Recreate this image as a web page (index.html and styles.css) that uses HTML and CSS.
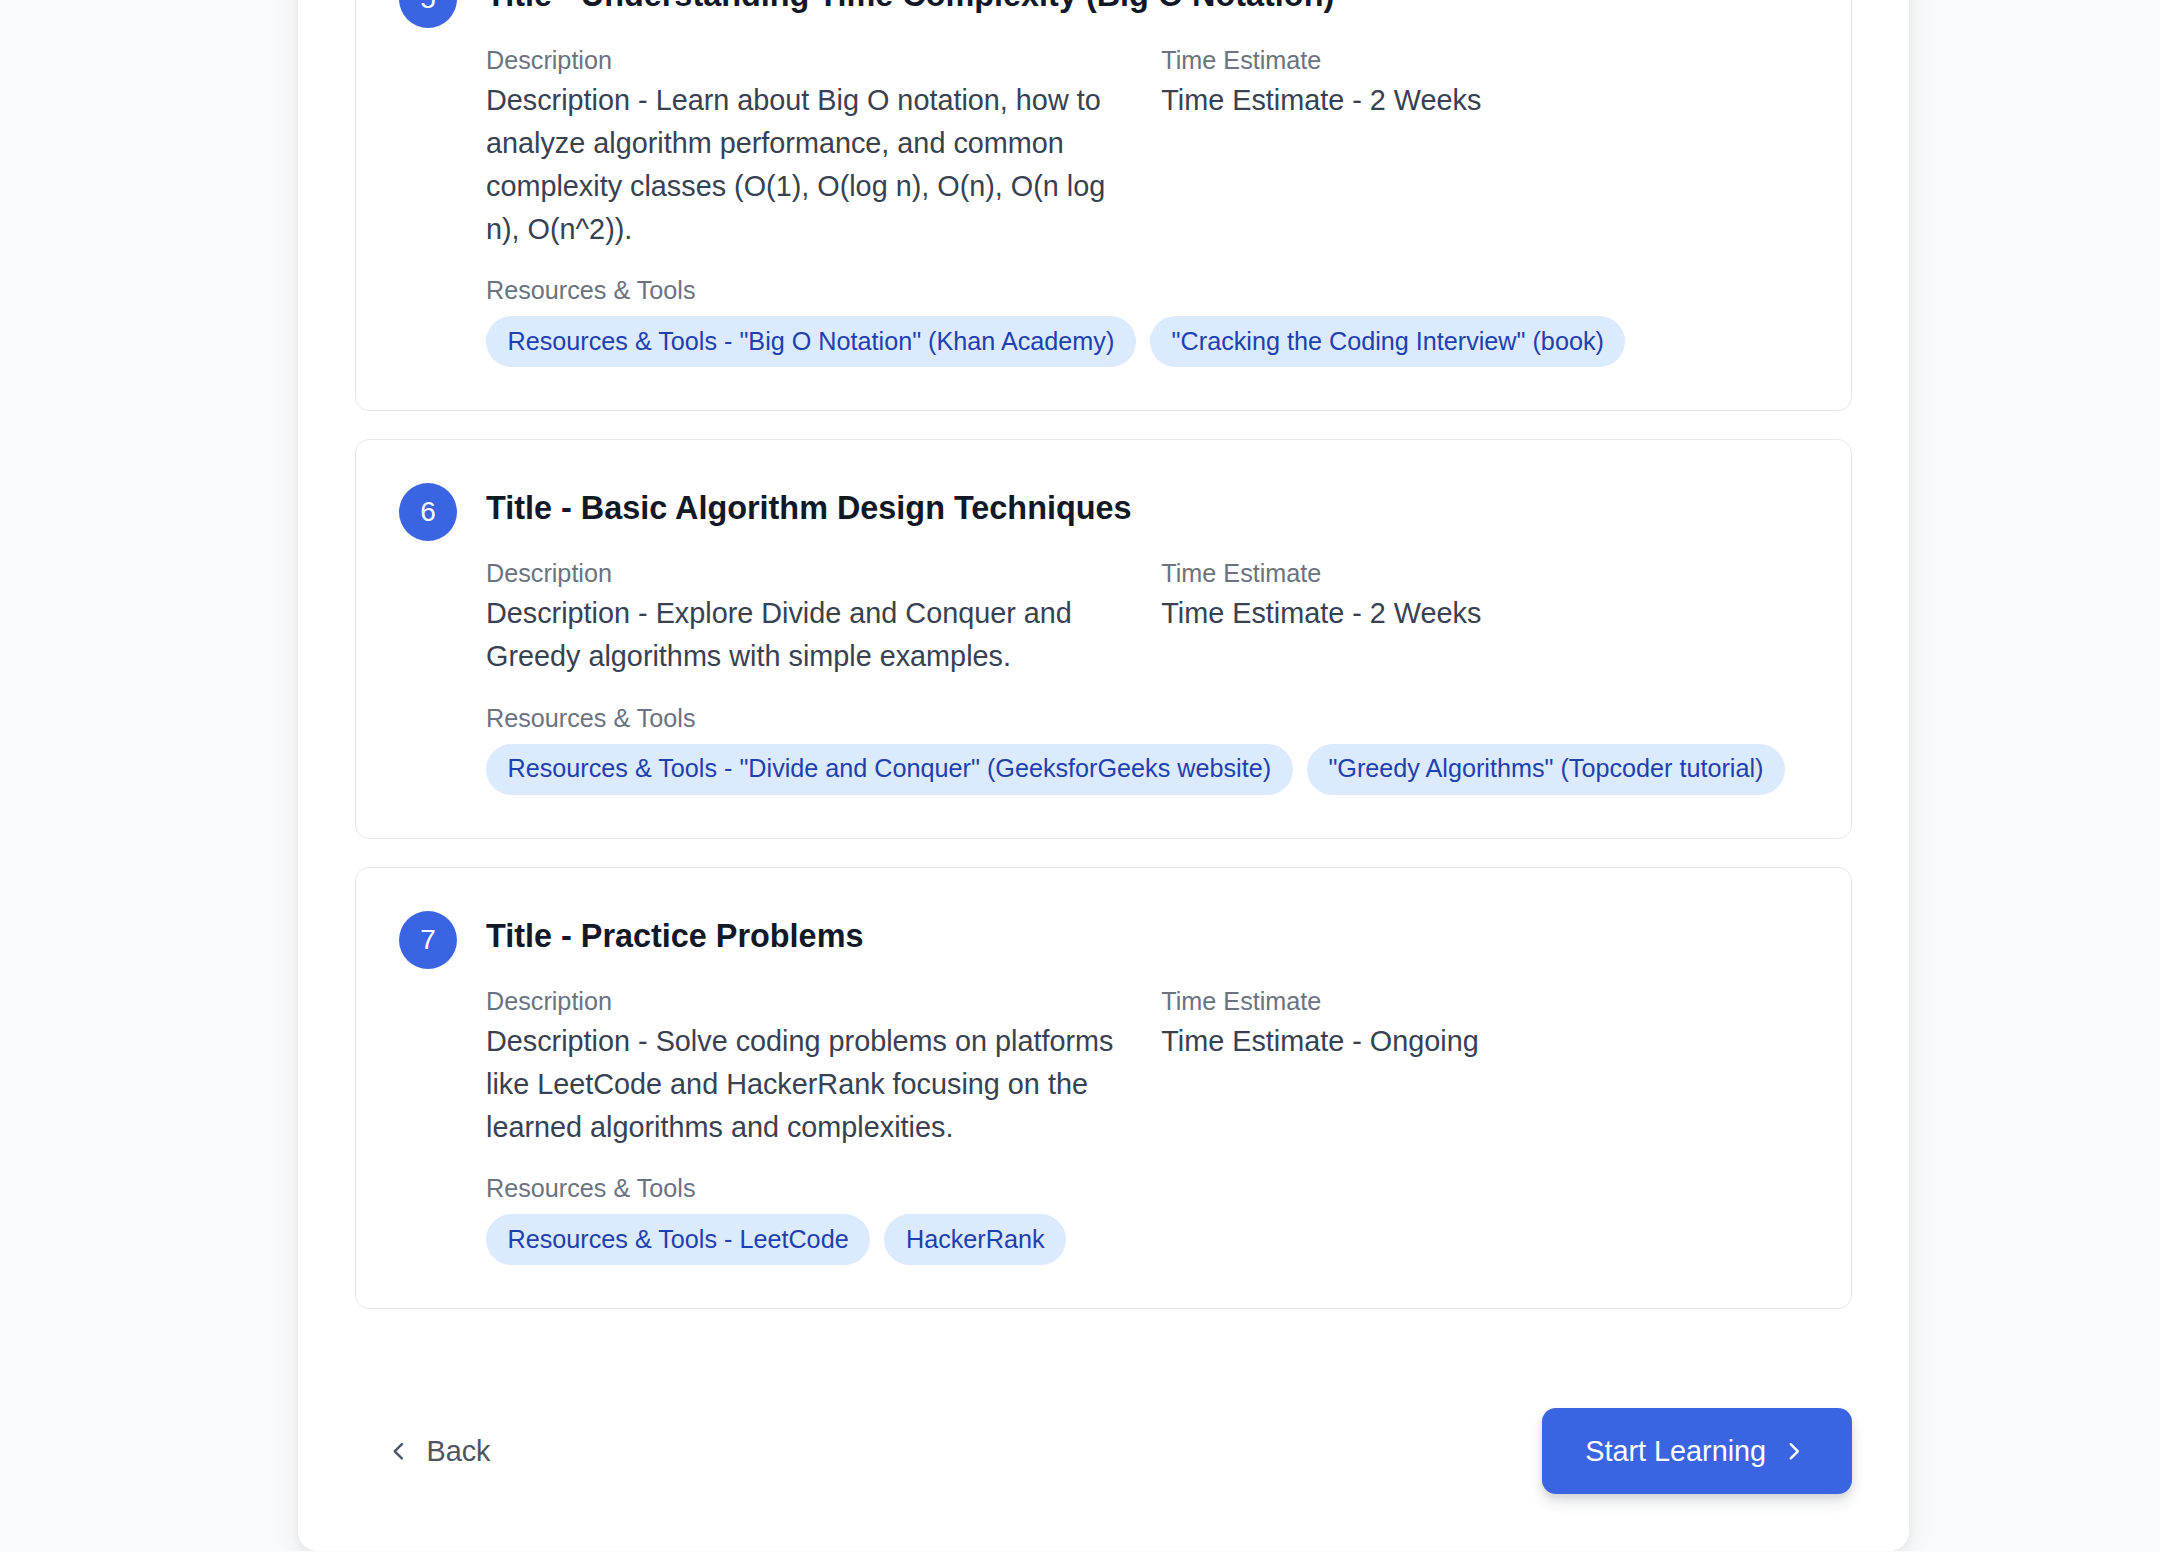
FILE: index.html
```html
<!DOCTYPE html>
<html lang="en">
<head>
<meta charset="utf-8">
<title>Learning Path</title>
<link rel="stylesheet" href="styles.css">
</head>
<body>
<div class="page">
  <main class="panel">
    <div class="steps">
      <section class="step">
        <div class="num">5</div>
        <div class="step-body">
          <h3 class="title">Title - Understanding Time Complexity (Big O Notation)</h3>
          <div class="grid">
            <div>
              <p class="label">Description</p>
              <p class="value">Description - Learn about Big O notation, how to analyze algorithm performance, and common complexity classes (O(1), O(log n), O(n), O(n log n), O(n^2)).</p>
            </div>
            <div>
              <p class="label">Time Estimate</p>
              <p class="value">Time Estimate - 2 Weeks</p>
            </div>
          </div>
          <div class="resources">
            <p class="label">Resources &amp; Tools</p>
            <div class="tags">
              <span class="tag">Resources &amp; Tools - "Big O Notation" (Khan Academy)</span>
              <span class="tag">"Cracking the Coding Interview" (book)</span>
            </div>
          </div>
        </div>
      </section>

      <section class="step">
        <div class="num">6</div>
        <div class="step-body">
          <h3 class="title">Title - Basic Algorithm Design Techniques</h3>
          <div class="grid">
            <div>
              <p class="label">Description</p>
              <p class="value">Description - Explore Divide and Conquer and Greedy algorithms with simple examples.</p>
            </div>
            <div>
              <p class="label">Time Estimate</p>
              <p class="value">Time Estimate - 2 Weeks</p>
            </div>
          </div>
          <div class="resources">
            <p class="label">Resources &amp; Tools</p>
            <div class="tags">
              <span class="tag">Resources &amp; Tools - "Divide and Conquer" (GeeksforGeeks website)</span>
              <span class="tag">"Greedy Algorithms" (Topcoder tutorial)</span>
            </div>
          </div>
        </div>
      </section>

      <section class="step">
        <div class="num">7</div>
        <div class="step-body">
          <h3 class="title">Title - Practice Problems</h3>
          <div class="grid">
            <div>
              <p class="label">Description</p>
              <p class="value">Description - Solve coding problems on platforms like LeetCode and HackerRank focusing on the learned algorithms and complexities.</p>
            </div>
            <div>
              <p class="label">Time Estimate</p>
              <p class="value">Time Estimate - Ongoing</p>
            </div>
          </div>
          <div class="resources">
            <p class="label">Resources &amp; Tools</p>
            <div class="tags">
              <span class="tag">Resources &amp; Tools - LeetCode</span>
              <span class="tag">HackerRank</span>
            </div>
          </div>
        </div>
      </section>
    </div>

    <div class="footer">
      <button class="back" type="button">
        <svg class="chev" viewBox="0 0 24 24" fill="none" stroke="currentColor" stroke-width="2" stroke-linecap="round" stroke-linejoin="round"><path d="m15 18-6-6 6-6"/></svg>
        <span>Back</span>
      </button>
      <button class="start" type="button">
        <span>Start Learning</span>
        <svg class="chev" viewBox="0 0 24 24" fill="none" stroke="currentColor" stroke-width="2" stroke-linecap="round" stroke-linejoin="round"><path d="m9 18 6-6-6-6"/></svg>
      </button>
    </div>
  </main>
</div>
</body>
</html>
```

FILE: styles.css
```css
html, body {
  margin: 0;
  padding: 0;
}

body {
  background: #f9fafb;
  font-family: "Liberation Sans", Arial, Helvetica, sans-serif;
  overflow: hidden;
}

.page {
  padding-left: 298px;
}

.panel {
  display: block;
  width: 1611px;
  box-sizing: border-box;
  margin-top: -131px;
  padding: 57px;
  background: #ffffff;
  border-radius: 20px;
  box-shadow: 0 10px 28px rgba(17, 24, 39, 0.07), 0 4px 10px rgba(17, 24, 39, 0.04);
}

.steps {
  display: flex;
  flex-direction: column;
  gap: 28.6px;
}

.step {
  display: flex;
  align-items: flex-start;
  gap: 29px;
  padding: 43px;
  border: 1px solid #e5e7eb;
  border-radius: 14px;
  background: #ffffff;
}

.num {
  flex: none;
  width: 58px;
  height: 58px;
  border-radius: 50%;
  background: #3b64e2;
  color: #ffffff;
  font-size: 28px;
  display: flex;
  align-items: center;
  justify-content: center;
}

.step-body {
  flex: 1;
  min-width: 0;
}

.title {
  margin: 0 0 23px;
  font-size: 32.4px;
  line-height: 50px;
  font-weight: 700;
  color: #111827;
}

.grid {
  display: grid;
  grid-template-columns: 1fr 1fr;
  column-gap: 28.6px;
}

.label {
  margin: 0;
  font-size: 25.2px;
  line-height: 35.8px;
  color: #6b7280;
}

.value {
  margin: 0;
  font-size: 28.8px;
  line-height: 42.9px;
  color: #374151;
}

.resources {
  margin-top: 22.5px;
}

.tags {
  display: flex;
  flex-wrap: wrap;
  gap: 14.3px;
  margin-top: 7.2px;
}

.tag {
  background: #dbeafe;
  color: #1e40af;
  font-size: 25.2px;
  line-height: 35.8px;
  padding: 7.6px 21.5px;
  border-radius: 9999px;
}

.footer {
  display: flex;
  justify-content: space-between;
  align-items: center;
  margin-top: 99px;
}

.back,
.start {
  display: flex;
  align-items: center;
  gap: 14.3px;
  font-family: inherit;
  font-size: 28.8px;
  line-height: 42.9px;
  border: 0;
  cursor: pointer;
}

.back {
  padding: 21.5px 28.6px;
  background: transparent;
  color: #4b5563;
}

.start {
  padding: 21.5px 43px;
  background: #3b64e2;
  color: #ffffff;
  border-radius: 14px;
  box-shadow: 0 8px 14px rgba(30, 41, 59, 0.14), 0 3px 6px rgba(30, 41, 59, 0.08);
}

.chev {
  width: 28.6px;
  height: 28.6px;
  flex: none;
}
```
